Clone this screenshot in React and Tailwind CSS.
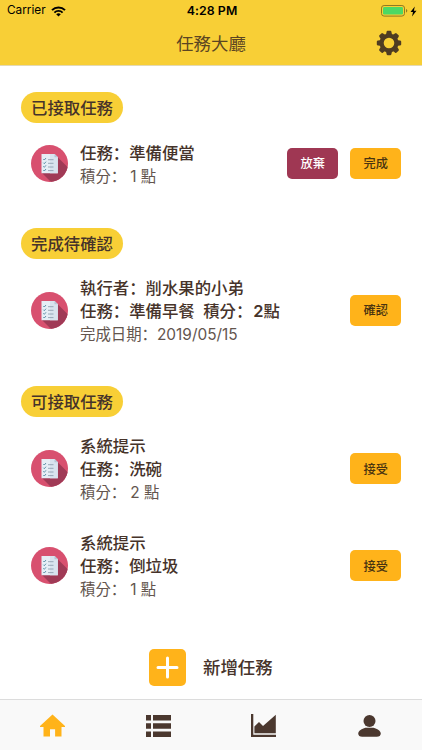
const pendingTasks = [
  { id: 3, name: "洗碗", points: 2 },
  { id: 4, name: "倒垃圾", points: 1 },
];

// Full-width colon, set in the SC face so the dots sit left in the cell
function Colon() {
  return (
    <span className="font-['Noto_Sans_CJK_SC',sans-serif]">：</span>
  );
}

function StatusBar() {
  return (
    <div className="grid h-[22px] grid-cols-3 items-center pr-[5px] pl-[7px] font-['Inter',sans-serif] text-[11.800px] text-black">
      <div className="flex items-center gap-[5px]">
        <span>Carrier</span>
        <svg width="15" height="11" viewBox="0 0 15 11" fill="none" stroke="#000">
          <path d="M1 4.1a9.2 9.2 0 0 1 13 0" strokeWidth="2" />
          <path d="M3.4 6.6a5.8 5.8 0 0 1 8.2 0" strokeWidth="1.9" />
          <path d="M5.2 8.3a3.3 3.3 0 0 1 4.6 0L7.5 10.6z" fill="#000" stroke="none" />
        </svg>
      </div>
      <div className="text-center text-[12.300px] font-semibold tracking-[0.1px]">
        4:28 PM
      </div>
      <div className="flex items-center justify-end gap-[2px]">
        <svg width="27" height="12" viewBox="0 0 27 12">
          <rect x="0.5" y="0.5" width="23" height="10.6" rx="2.6" fill="none" stroke="#8f7a22" />
          <rect x="2" y="2" width="20" height="7.6" rx="1.4" fill="#4cd964" />
          <path d="M25 4v3.6c.8-.3 1.3-1 1.3-1.8S25.800 4.300 25 4z" fill="#8f7a22" />
        </svg>
        <svg width="7" height="11" viewBox="0 0 7 11">
          <path d="M4.800 0.500L0.500 6h2.500L2 10.500 6.500 4.700H3.900z" fill="#000" />
        </svg>
      </div>
    </div>
  );
}

function GearIcon() {
  return (
    <svg width="26" height="26" viewBox="-13 -13 26 26">
      <circle r="7.300" fill="none" stroke="#4f3c22" strokeWidth="4" />
      <g fill="#4f3c22">
        {[0, 45, 90, 135, 180, 225, 270, 315].map((angle) => (
          <path
            key={angle}
            transform={`rotate(${angle})`}
            d="M-3.600-8.200Q-2.600-9-2.500-10.800Q-2.400-12.200-1.400-12.200H1.400Q2.400-12.200 2.500-10.800Q2.600-9 3.600-8.200L2-7H-2z"
          />
        ))}
      </g>
    </svg>
  );
}

function TaskIcon() {
  return (
    <svg className="h-[37px] w-[37px] shrink-0" viewBox="0 0 37 37">
      <clipPath id="disc">
        <circle cx="18.500" cy="18.500" r="18.500" />
      </clipPath>
      <g clipPath="url(#disc)">
        <rect width="37" height="37" fill="#d8506f" />
        <path d="M26.500 12L37 22.500V37H20L10.500 27.500z" fill="#a03a56" />
      </g>
      <path d="M10.500 9h13l3.300 3.300V28.300H10.500z" fill="#e6eef6" />
      <path d="M19 9h4.500l3.300 3.300V28.300H19z" fill="#d8e3ee" />
      <path d="M23.500 9v3.300h3.300z" fill="#b4c5d5" />
      <g fill="none" strokeWidth="0.8">
        <path
          d="M12.300 14l1 1 1.700-2M12.300 17.700l1 1 1.700-2M12.300 21.300l1 1 1.700-2M12.300 25l1 1 1.700-2"
          stroke="#3d7894"
        />
        <path d="M17 14.700h5.500M17 18.300h5.500M17 22h5.500M17 25.600h5.500" stroke="#8797a8" />
      </g>
    </svg>
  );
}

function SectionBadge({ children }) {
  return (
    <h2 className="flex h-[30.500px] w-[102px] items-center justify-center rounded-full bg-[#f8cf36] text-[16.400px] font-medium">
      {children}
    </h2>
  );
}

function ActionButton({ children, danger }) {
  return (
    <button
      className={`h-[31px] w-[51px] rounded-[5px] text-[12.200px] font-medium ${
        danger ? "bg-[#9f3753] text-white" : "bg-[#ffb31a] text-[#4a3410]"
      }`}
    >
      {children}
    </button>
  );
}

function TaskRow({ children, actions }) {
  return (
    <div className="flex items-center pr-[20.800px] pl-[31px]">
      <TaskIcon />
      <div className="ml-3 flex-1 text-[16.400px] leading-[23px] font-medium whitespace-pre">
        {children}
      </div>
      <div className="flex gap-3">{actions}</div>
    </div>
  );
}

function Points({ value }) {
  return (
    <p className="h-[23px] text-[15.400px] font-normal text-[#63554e]">
      積分
      <Colon />
      <span className="ml-[4px] font-['Inter','Noto_Sans_CJK_TC',sans-serif]">
        {value} 點
      </span>
    </p>
  );
}

function TabBar() {
  return (
    <nav className="grid h-[51px] grid-cols-4 border-t border-[#dcdcdc] bg-[#f9f9f9] text-[#4b382f]">
      <a className="flex items-center justify-center pt-px">
        <svg width="25" height="23" viewBox="0 0 25 23" fill="#ffb31a">
          <path d="M12.500 0.500L25 12v1h-3.500v9.500h-6.400v-7.300H10v7.300H3.500V13H0v-1z" />
        </svg>
      </a>
      <a className="flex items-center justify-center pt-px">
        <svg width="25" height="22" viewBox="0 0 25 22" fill="currentColor">
          <path d="M0 0h5v5.500H0zM7 0h18v5.500H7zM0 8.200h5v5.500H0zM7 8.200h18v5.500H7zM0 16.400h5V22H0zM7 16.400h18V22H7z" />
        </svg>
      </a>
      <a className="flex items-center justify-center">
        <svg width="25" height="23" viewBox="0 0 25 23" fill="currentColor">
          <path d="M0 0h2.300v20.800H25V23H0z" />
          <path d="M3.400 19.300V12.500L8 8l4 4L24.800 0.800V19.300z" />
        </svg>
      </a>
      <a className="flex items-center justify-center pt-px">
        <svg width="23" height="22" viewBox="0 0 23 22" fill="currentColor">
          <circle cx="11.500" cy="6" r="6" />
          <path d="M11.500 12.800c2.500 0 3.500-.3 5.500.4 3.500 1.200 5.800 3 5.800 5.300 0 2-1.600 3.300-4 3.300H4.200c-2.400 0-4-1.300-4-3.300 0-2.300 2.300-4.100 5.800-5.300 2-.7 3-.4 5.500-.4z" />
        </svg>
      </a>
    </nav>
  );
}

export default function App() {
  return (
    <div className="flex h-[750px] w-[422px] flex-col overflow-hidden bg-white font-['Noto_Sans_CJK_TC',sans-serif] text-[#46332a]">
      <header className="h-[66px] border-b border-[#e3d9b4] bg-[#f8cf36]">
        <StatusBar />
        <div className="grid h-[42px] grid-cols-[1fr_auto_1fr] items-center px-5">
          <h1 className="col-start-2 text-[17.400px] text-[#5b4522]">任務大廳</h1>
          <button className="justify-self-end">
            <GearIcon />
          </button>
        </div>
      </header>

      <main className="flex-1 pt-[26px]">
        <section className="h-[136px]">
          <div className="pl-[21px]">
            <SectionBadge>已接取任務</SectionBadge>
          </div>
          <div className="pt-[18px]">
            <TaskRow
              actions={
                <>
                  <ActionButton danger>放棄</ActionButton>
                  <ActionButton>完成</ActionButton>
                </>
              }
            >
              <p className="h-[23px]">任務<Colon />準備便當</p>
              <Points value={1} />
            </TaskRow>
          </div>
        </section>

        <section className="h-[158px]">
          <div className="pl-[21px]">
            <SectionBadge>完成待確認</SectionBadge>
          </div>
          <div className="pt-[17.500px]">
            <TaskRow actions={<ActionButton>確認</ActionButton>}>
              <p className="h-[23px]">執行者<Colon />削水果的小弟</p>
              <p className="h-[23px]">
                任務<Colon />準備早餐{"  "}
                <span className="ml-px">積分</span>
                <Colon />
                <span className="ml-px font-['Inter',sans-serif] font-semibold">2</span>點
              </p>
              <p className="h-[23px] text-[15.400px] font-normal text-[#63554e]">
                完成日期<Colon />
                <span className="font-['Inter',sans-serif]">2019/05/15</span>
              </p>
            </TaskRow>
          </div>
        </section>

        <section>
          <div className="pl-[21px]">
            <SectionBadge>可接取任務</SectionBadge>
          </div>
          <div className="flex flex-col gap-[28.300px] pt-[17.700px]">
            {pendingTasks.map((task) => (
              <TaskRow key={task.id} actions={<ActionButton>接受</ActionButton>}>
                <p className="h-[23px]">系統提示</p>
                <p className="h-[23px]">任務<Colon />{task.name}</p>
                <Points value={task.points} />
              </TaskRow>
            ))}
          </div>
        </section>

        <button className="mt-[48.500px] ml-[149px] flex items-center gap-[17px] text-[17.400px] font-medium">
          <svg width="37" height="37" viewBox="0 0 37 37">
            <rect width="37" height="37" rx="5" fill="#ffb31a" />
            <path d="M18.500 9v19M9 18.500h19" stroke="#fff" strokeWidth="3" strokeLinecap="round" />
          </svg>
          新增任務
        </button>
      </main>

      <TabBar />
    </div>
  );
}
